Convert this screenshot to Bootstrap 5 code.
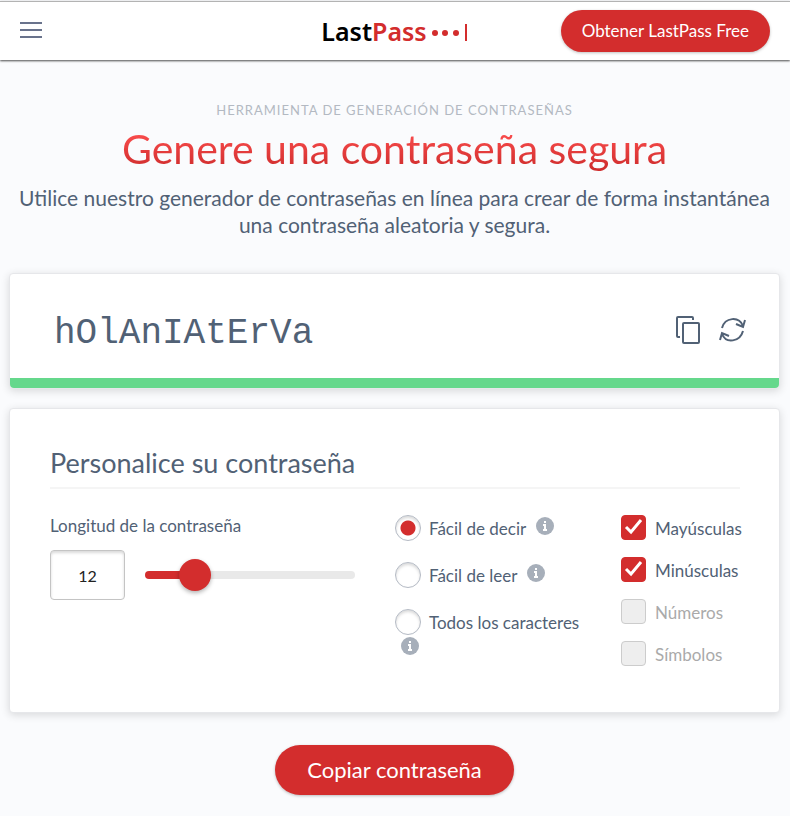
<!DOCTYPE html>
<html lang="es">
<head>
<meta charset="utf-8">
<meta name="viewport" content="width=device-width, initial-scale=1">
<title>Generador de contraseñas | LastPass</title>
<link href="https://cdn.jsdelivr.net/npm/bootstrap@5.3.0/dist/css/bootstrap.min.css" rel="stylesheet">
<style>
:root { --brand: #d32d2d; --ink: #516175; }
body { background: #fafbfd; color: var(--ink); font-family: Lato, "Open Sans", sans-serif; }
.topbar { background: #fff; border-top: 1px solid #b3b3b3; margin-top: 1px; height: 59px; padding: 0 20px 0 19px; box-shadow: 0 1px 2px rgba(0,0,0,.7); display: grid; grid-template-columns: 1fr auto 1fr; }
.brand-logo { font: 600 25px/32px "Noto Sans", sans-serif; color: #000; }
.brand-logo span { color: var(--brand); }
.btn-brand { --bs-btn-color: #fff; --bs-btn-bg: var(--brand); --bs-btn-hover-color: #fff; --bs-btn-hover-bg: #b92626; --bs-btn-active-color: #fff; --bs-btn-active-bg: #a82222; border: 0; border-radius: 50px; box-shadow: 0 1px 3px rgba(0,0,0,.25); }
.btn-top { font-size: 17px; line-height: 22px; padding: 10px 21px; }
.btn-copy { font-size: 22px; line-height: 26px; padding: 12px 32px; }
.page-body { padding: 0 10px 0 9px; }
.eyebrow { font-size: 13px; line-height: 20px; letter-spacing: 1px; color: #b3b9c2; }
.hero-title { font-size: 41px; line-height: 50px; margin-bottom: 10px; background: linear-gradient(#ff5050 10%, #cf2d2d 90%); -webkit-background-clip: text; background-clip: text; color: transparent; }
.hero-text { font-size: 21px; line-height: 27px; }
.panel { background: #fff; border: 1px solid #e6e7ea; border-radius: 4px; box-shadow: 0 2px 8px rgba(0,0,0,.14); }
.panel-password { margin-top: 35px; }
.password-row { padding: 28px 32px 20px 44px; }
.password { font: 36px/48px "Courier New", "Liberation Mono", monospace; color: var(--ink); min-width: 0; }
.strength { height: 10px; background: #65d88c; border-radius: 0 0 4px 4px; }
.icon-btn { color: var(--ink); line-height: 0; }
.panel-settings { margin: 19px 0 32px; padding: 37px 39px 45px 40px; }
.panel-title { font-size: 27px; line-height: 34px; padding-bottom: 7px; margin-bottom: 26px; border-bottom: 2px solid #f5f5f5; }
.settings { display: grid; grid-template-columns: minmax(0,345fr) minmax(0,226fr) minmax(0,119fr); font-size: 17px; line-height: 22px; }
.length-col { padding-right: 40px; }
.length-row { margin-top: 13px; gap: 20px; }
.length-box { width: 75px; height: 50px; border: 1px solid #c4c4c4; border-radius: 4px; box-shadow: inset 0 2px 3px rgba(0,0,0,.15); font-size: 16px; color: #222; }
.length-range { -webkit-appearance: none; appearance: none; height: 34px; background: transparent; min-width: 0; margin: 0; }
.length-range::-webkit-slider-runnable-track { height: 8px; border-radius: 4px; background: linear-gradient(to right, var(--brand) 24%, #e9e9e9 24%); }
.length-range::-webkit-slider-thumb { -webkit-appearance: none; width: 32px; height: 32px; margin-top: -12px; border-radius: 50%; background: var(--brand); box-shadow: 0 2px 4px rgba(0,0,0,.3); }
.choice { min-height: 26px; white-space: nowrap; }
.choice-text { padding: 3px 4px 0 8px; }
.choice input { -webkit-appearance: none; appearance: none; margin: 0; flex: none; }
.choice input[type=radio] { width: 26px; height: 26px; border: 1px solid #b4bac4; border-radius: 50%; box-shadow: inset 0 2px 3px rgba(0,0,0,.15); }
.choice input[type=radio]:checked { background: radial-gradient(circle, var(--brand) 7px, transparent 8px); }
.choice input[type=checkbox] { width: 25px; height: 25px; border: 1px solid #ccc; border-radius: 4px; background: #eee; }
.choice input[type=checkbox]:checked { border-color: var(--brand); background: var(--brand) url("data:image/svg+xml,%3Csvg xmlns='http://www.w3.org/2000/svg' viewBox='0 0 23 23'%3E%3Cpath d='M4 11l5 5L19 4' fill='none' stroke='white' stroke-width='3'/%3E%3C/svg%3E"); }
.choice input:disabled + span { color: #aaa; }
.info-btn { margin: 2px 0 0 6px; height: 18px; line-height: 0; }
.list-modes { gap: 21px; padding-right: 20px; }
.list-modes > div { height: 26px; }
.list-sets { gap: 16px; }
.list-sets .choice-text { padding-left: 9px; }
</style>
<script src="https://cdn.jsdelivr.net/npm/bootstrap@5.3.0/dist/js/bootstrap.bundle.min.js" defer></script>
</head>
<body>
<svg class="d-none" xmlns="http://www.w3.org/2000/svg">
  <symbol id="info" viewBox="0 0 18 18"><circle cx="9" cy="9" r="9" fill="#a7afba"/><path d="M7 7h3v5h1v2H7v-2h1V9H7zM8 4h2v2H8z" fill="#fff"/></symbol>
</svg>
<header class="topbar align-items-center">
  <div><button class="btn p-0 mb-1 icon-btn" type="button" aria-label="Menú"><svg width="22" height="18" viewBox="0 0 22 18"><path d="M0 2h22M0 9h22M0 16h22" stroke="#69738c" stroke-width="2"/></svg></button></div>
  <a class="brand-logo text-decoration-none d-flex align-items-center" href="#" aria-label="LastPass">Last<span>Pass</span><svg class="ms-1" width="37" height="20" viewBox="0 0 37 20" fill="#d32d2d"><circle cx="4" cy="12" r="3"/><circle cx="14" cy="12" r="3"/><circle cx="25" cy="12" r="3"/><path d="M34 3h2v17h-2z"/></svg></a>
  <div class="text-end"><a class="btn btn-brand btn-top" href="#">Obtener LastPass Free</a></div>
</header>
<main class="page-body">
  <section class="text-center pt-4 mt-3">
    <p class="eyebrow text-uppercase mb-0">Herramienta de generación de contraseñas</p>
    <h1 class="hero-title fw-normal mt-1">Genere una contraseña segura</h1>
    <p class="hero-text mb-0">Utilice nuestro generador de contraseñas en línea para crear de forma instantánea una contraseña aleatoria y segura.</p>
  </section>
  <section class="panel panel-password">
    <div class="password-row d-flex align-items-center">
      <output class="password flex-grow-1 pt-2">hOlAnIAtErVa</output>
      <button class="btn p-0 icon-btn" type="button" aria-label="Copiar"><svg width="26" height="30" viewBox="0 0 26 30" fill="none" stroke="currentColor" stroke-width="2"><path d="M19 5V3Q19 2 18 2H4Q3 2 3 3v18q0 1 1 1h2"/><rect x="9" y="8" width="16" height="20" rx="1"/></svg></button>
      <button class="btn p-0 ms-3 icon-btn" type="button" aria-label="Generar"><svg width="28" height="26" viewBox="0 0 28 26" fill="none" stroke="currentColor" stroke-width="2"><path d="M4 11C7 0 21-1 25 9M25 14C22 25 8 27 4 17M27 3l-2 7-7-3M2 23l2-7 7 3"/></svg></button>
    </div>
    <div class="strength" role="meter" aria-label="Seguridad" aria-valuenow="100"></div>
  </section>
  <section class="panel panel-settings">
    <h2 class="panel-title fw-normal">Personalice su contraseña</h2>
    <div class="settings">
      <div class="length-col">
        <label class="d-block" for="len">Longitud de la contraseña</label>
        <div class="d-flex align-items-center length-row">
          <input class="length-box text-center" id="len" type="text" inputmode="numeric" value="12">
          <input class="length-range flex-grow-1" type="range" min="4" max="46" value="12" aria-label="Longitud">
        </div>
      </div>
      <div class="list-modes d-flex flex-column">
        <div class="d-flex flex-wrap align-items-start align-content-start"><label class="choice d-flex"><input type="radio" name="mode" checked><span class="choice-text">Fácil de decir</span></label><button class="btn p-0 border-0 info-btn" type="button" aria-label="Información"><svg width="18" height="18"><use href="#info"/></svg></button></div>
        <div class="d-flex flex-wrap align-items-start align-content-start"><label class="choice d-flex"><input type="radio" name="mode"><span class="choice-text">Fácil de leer</span></label><button class="btn p-0 border-0 info-btn" type="button" aria-label="Información"><svg width="18" height="18"><use href="#info"/></svg></button></div>
        <div class="d-flex flex-wrap align-items-start align-content-start"><label class="choice d-flex"><input type="radio" name="mode"><span class="choice-text">Todos los caracteres</span></label><button class="btn p-0 border-0 info-btn" type="button" aria-label="Información"><svg width="18" height="18"><use href="#info"/></svg></button></div>
      </div>
      <div class="list-sets d-flex flex-column">
        <label class="choice d-flex"><input type="checkbox" checked><span class="choice-text">Mayúsculas</span></label>
        <label class="choice d-flex"><input type="checkbox" checked><span class="choice-text">Minúsculas</span></label>
        <label class="choice d-flex"><input type="checkbox" disabled><span class="choice-text">Números</span></label>
        <label class="choice d-flex"><input type="checkbox" disabled><span class="choice-text">Símbolos</span></label>
      </div>
    </div>
  </section>
  <div class="text-center pb-3"><button class="btn btn-brand btn-copy" type="button">Copiar contraseña</button></div>
</main>
</body>
</html>
